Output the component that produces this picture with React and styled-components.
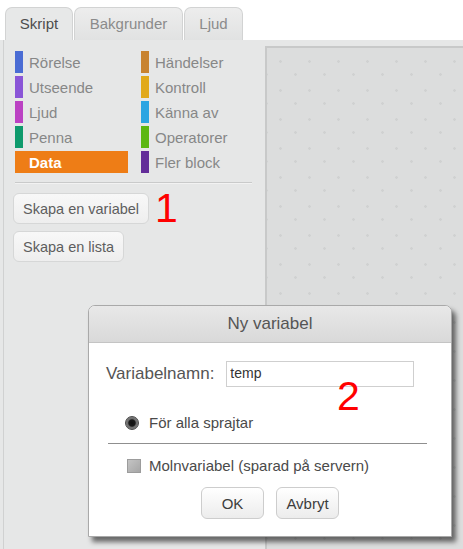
import React from "react";
import styled, { createGlobalStyle } from "styled-components";

const GlobalStyle = createGlobalStyle`
  html, body {
    margin: 0;
    padding: 0;
    background: #ffffff;
  }
  body {
    font-family: "Liberation Sans", Arial, Helvetica, sans-serif;
  }
`;

const StyledPage = styled.main`
  position: relative;
  height: 100vh;
  display: flex;
  flex-direction: column;
  overflow: hidden;
  background: #ffffff;
`;

const StyledTabBar = styled.nav`
  display: flex;
  gap: 1px;
  padding: 7px 0 0 5px;
  height: 33px;
  flex-shrink: 0;
`;

const StyledTab = styled.div`
  height: 33px;
  width: ${(props) => props.width}px;
  box-sizing: border-box;
  display: flex;
  align-items: center;
  justify-content: center;
  padding-bottom: 2px;
  border: 1px solid #d2d3d3;
  border-bottom: none;
  border-radius: 7px 7px 0 0;
  font-size: 15px;
  color: ${(props) => (props.active ? "#4d4d4d" : "#8b8b8b")};
  background: ${(props) =>
    props.active
      ? "#e7e8e8"
      : "linear-gradient(#ededed, #e1e2e2)"};
`;

const StyledWorkspace = styled.section`
  flex: 1;
  display: flex;
  background: #e6e7e7;
`;

const StyledPalette = styled.aside`
  width: 250px;
  margin-left: 3px;
  border-left: 1px solid #d0d1d1;
  padding: 11px 0 0 9px;
  box-sizing: content-box;
`;

const StyledCategoryGrid = styled.div`
  display: grid;
  grid-template-columns: 126px 1fr;
  row-gap: 3px;
  margin-left: 2px;
`;

const StyledCategory = styled.div`
  height: 22px;
  width: ${(props) => (props.selected ? "113px" : "auto")};
  display: flex;
  align-items: center;
  gap: 6px;
  font-size: 15px;
  font-weight: ${(props) => (props.selected ? "bold" : "normal")};
  color: ${(props) => (props.selected ? "#ffffff" : "#878787")};
  background: ${(props) => (props.selected ? props.color : "transparent")};
`;

const StyledSwatch = styled.span`
  width: 8px;
  height: 22px;
  flex-shrink: 0;
  background: ${(props) => props.color};
`;

const StyledSeparator = styled.hr`
  margin: 9px 0 0 2px;
  width: 237px;
  border: none;
  border-top: 1px solid #c9caca;
  border-bottom: 1px solid #f2f2f2;
`;

const StyledButtonStack = styled.div`
  display: flex;
  flex-direction: column;
  align-items: flex-start;
  gap: 7px;
  margin-top: 9px;
`;

const StyledButtonRow = styled.div`
  display: flex;
  align-items: center;
  gap: 6px;
  height: 31px;
`;

const StyledPaletteButton = styled.button`
  height: 31px;
  padding: 0 9px;
  border: 1px solid #d6d7d7;
  border-radius: 6px;
  background: linear-gradient(#f8f8f8, #eeeeee);
  font-family: inherit;
  font-size: 14.5px;
  color: #5e5e5e;
  cursor: pointer;
`;

const StyledMarker = styled.span`
  font-size: 41px;
  line-height: 31px;
  color: #ff0000;
  font-family: "Liberation Sans", Arial, sans-serif;
`;

const StyledScriptArea = styled.div`
  flex: 1;
  margin-top: 6px;
  margin-left: 2px;
  border-top: 2px solid #c8c9c9;
  border-left: 2px solid #c8c9c9;
  background-color: #dcdddd;
  background-image: radial-gradient(circle, #d0d1d1 1px, transparent 1.6px),
    radial-gradient(circle, #d0d1d1 1px, transparent 1.6px);
  background-size: 29px 29px;
  background-position: -1px -1px, -15px 12px;
`;

const StyledDialog = styled.div`
  position: absolute;
  left: 88px;
  top: 305px;
  width: 364px;
  height: 232px;
  box-sizing: border-box;
  display: flex;
  flex-direction: column;
  border: 1px solid #a9a9a9;
  border-radius: 7px 7px 0 0;
  background: #ffffff;
  box-shadow: 4px 5px 5px rgba(0, 0, 0, 0.55);
  overflow: hidden;
`;

const StyledDialogHeader = styled.header`
  height: 36px;
  flex-shrink: 0;
  display: flex;
  align-items: center;
  justify-content: center;
  background: linear-gradient(#e8e8e8, #d9d9d9);
  border-bottom: 1px solid #c4c4c4;
  font-size: 17px;
  color: #555555;
`;

const StyledDialogBody = styled.div`
  position: relative;
  flex: 1;
  display: flex;
  flex-direction: column;
  padding: 18px 24px 0 17px;
`;

const StyledNameRow = styled.label`
  display: flex;
  align-items: center;
  gap: 12px;
  font-size: 17px;
  color: #555555;
`;

const StyledInput = styled.input`
  width: 188px;
  height: 26px;
  box-sizing: border-box;
  border: 1px solid #cfcfcf;
  padding: 0 3px 2px;
  font-family: inherit;
  font-size: 14px;
  color: #333333;
  outline: none;
`;

const StyledOptionRow = styled.div`
  display: flex;
  align-items: center;
  gap: ${(props) => props.gap}px;
  margin: ${(props) => props.margin};
  padding-left: ${(props) => props.indent}px;
  font-size: 15px;
  color: #4a4a4a;
`;

const StyledRadio = styled.span`
  width: 14px;
  height: 14px;
  box-sizing: border-box;
  border-radius: 50%;
  border: 1px solid #4a4a4a;
  background: radial-gradient(
    circle,
    #111111 0,
    #1a1a1a 3.2px,
    #6a6a6a 4.2px,
    #9a9a9a 100%
  );
`;

const StyledCheckbox = styled.span`
  width: 14px;
  height: 14px;
  box-sizing: border-box;
  border: 1px solid #9c9c9c;
  background: linear-gradient(135deg, #c4c4c4, #a6a6a6);
`;

const StyledRule = styled.hr`
  margin: 12px 0 0 2px;
  border: none;
  border-top: 1px solid #8f8f8f;
`;

const StyledDialogActions = styled.div`
  display: flex;
  justify-content: center;
  gap: 12px;
  margin: 13px 0 0 7px;
`;

const StyledDialogButton = styled.button`
  width: 63px;
  height: 32px;
  border: 1px solid #cdcdcd;
  border-radius: 6px;
  background: linear-gradient(#ffffff, #ececec);
  font-family: inherit;
  font-size: 15px;
  color: #3d3d3d;
  cursor: pointer;
`;

const StyledDialogMarker = styled(StyledMarker)`
  position: absolute;
  left: 248px;
  top: 38px;
`;

const leftCategories = [
  { name: "Rörelse", color: "#4a6cd4" },
  { name: "Utseende", color: "#8a55d7" },
  { name: "Ljud", color: "#bb42c3" },
  { name: "Penna", color: "#0e9a6c" },
  { name: "Data", color: "#ee7d16", selected: true },
];

const rightCategories = [
  { name: "Händelser", color: "#c88330" },
  { name: "Kontroll", color: "#e1a91a" },
  { name: "Känna av", color: "#2ca5e2" },
  { name: "Operatorer", color: "#5cb712" },
  { name: "Fler block", color: "#632d99" },
];

const categoryRows = leftCategories.map((left, i) => [left, rightCategories[i]]);

const Category = ({ name, color, selected }) => (
  <StyledCategory color={color} selected={selected}>
    <StyledSwatch color={color} />
    {name}
  </StyledCategory>
);

const App = () => {
  return (
    <>
      <GlobalStyle />
      <StyledPage>
        <StyledTabBar>
          <StyledTab active width={68}>
            Skript
          </StyledTab>
          <StyledTab width={109}>Bakgrunder</StyledTab>
          <StyledTab width={59}>Ljud</StyledTab>
        </StyledTabBar>
        <StyledWorkspace>
          <StyledPalette>
            <StyledCategoryGrid>
              {categoryRows.map(([left, right]) => (
                <React.Fragment key={left.name}>
                  <Category {...left} />
                  <Category {...right} />
                </React.Fragment>
              ))}
            </StyledCategoryGrid>
            <StyledSeparator />
            <StyledButtonStack>
              <StyledButtonRow>
                <StyledPaletteButton>Skapa en variabel</StyledPaletteButton>
                <StyledMarker>1</StyledMarker>
              </StyledButtonRow>
              <StyledPaletteButton>Skapa en lista</StyledPaletteButton>
            </StyledButtonStack>
          </StyledPalette>
          <StyledScriptArea />
        </StyledWorkspace>

        <StyledDialog>
          <StyledDialogHeader>Ny variabel</StyledDialogHeader>
          <StyledDialogBody>
            <StyledNameRow>
              Variabelnamn:
              <StyledInput defaultValue="temp" />
            </StyledNameRow>
            <StyledDialogMarker>2</StyledDialogMarker>
            <StyledOptionRow indent={19} gap={10} margin="27px 0 0 0">
              <StyledRadio />
              För alla sprajtar
            </StyledOptionRow>
            <StyledRule />
            <StyledOptionRow indent={21} gap={8} margin="13px 0 0 0">
              <StyledCheckbox />
              Molnvariabel (sparad på servern)
            </StyledOptionRow>
            <StyledDialogActions>
              <StyledDialogButton>OK</StyledDialogButton>
              <StyledDialogButton>Avbryt</StyledDialogButton>
            </StyledDialogActions>
          </StyledDialogBody>
        </StyledDialog>
      </StyledPage>
    </>
  );
};

export default App;
